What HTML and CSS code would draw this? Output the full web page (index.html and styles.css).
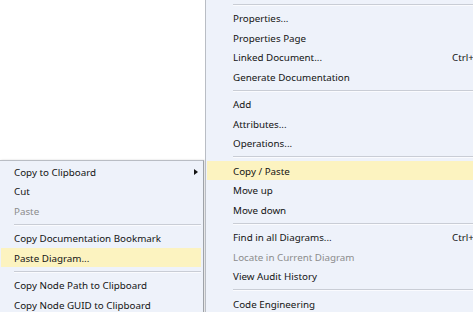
FILE: index.html
```html
<!DOCTYPE html>
<html lang="en">
<head>
  <meta charset="UTF-8" />
  <title>Context Menu</title>
  <link rel="stylesheet" href="styles.css">
</head>
<body>
  <div class="screen">
    <div class="side">
      <div class="submenu">
        <div class="item">Copy to Clipboard <span class="arrow"></span></div>
        <div class="item">Cut</div>
        <div class="item disabled">Paste</div>
        <div class="sep"></div>
        <div class="item">Copy Documentation Bookmark</div>
        <div class="item hot">Paste Diagram...</div>
        <div class="sep"></div>
        <div class="item">Copy Node Path to Clipboard</div>
        <div class="item">Copy Node GUID to Clipboard</div>
      </div>
    </div>

    <div class="menu">
      <div class="sep"></div>
      <div class="item">Properties...</div>
      <div class="item">Properties Page</div>
      <div class="item">Linked Document... <span class="key">Ctrl+</span></div>
      <div class="item">Generate Documentation</div>
      <div class="sep"></div>
      <div class="item">Add</div>
      <div class="item">Attributes...</div>
      <div class="item">Operations...</div>
      <div class="sep"></div>
      <div class="item hot">Copy / Paste</div>
      <div class="item">Move up</div>
      <div class="item">Move down</div>
      <div class="sep"></div>
      <div class="item">Find in all Diagrams... <span class="key">Ctrl+</span></div>
      <div class="item disabled">Locate in Current Diagram</div>
      <div class="item">View Audit History</div>
      <div class="sep"></div>
      <div class="item">Code Engineering</div>
    </div>
  </div>
</body>
</html>
```

FILE: styles.css
```css
body {
  margin: 0;
  padding: 0;
  background-color: #fff;
  font-family: "Noto Sans", "Open Sans", sans-serif;
  font-size: 9.8px;
  color: #141414;
  overflow: hidden;
}

.screen {
  display: flex;
  width: 473px;
  height: 312px;
  overflow: hidden;
  gap: 1px;
}

.side {
  width: 204px;
  padding-top: 159.5px;
}

.submenu {
  background-color: #eef2fa;
  border-top: 1px solid #b9bdc4;
  border-right: 1px solid #9ea2a8;
  padding: 1px 2px 0 1px;
  height: 200px;
  box-shadow: 1px 0 2px rgba(0, 0, 0, 0.15);
}

.submenu .item {
  padding-left: 13px;
}

.submenu .sep {
  margin-left: 13px;
}

.menu {
  flex: 1;
  background-color: #eef2fa;
  border-left: 1px solid #b9bdc4;
  padding-left: 1px;
}

.menu .item {
  padding-left: 26px;
}

.menu .sep {
  margin-left: 26px;
}

.item {
  position: relative;
  height: 19.5px;
  line-height: 21px;
  white-space: nowrap;
  overflow: hidden;
}

.hot {
  background-color: #fcf3c0;
}

.disabled {
  color: #8c8c8c;
}

.sep {
  height: 8px;
  position: relative;
}

.sep::after {
  content: "";
  position: absolute;
  left: 0;
  right: 0;
  top: 3.5px;
  height: 1px;
  background-color: #c9cdd5;
  border-bottom: 1px solid #fafbfe;
}

.key {
  position: absolute;
  left: 245px;
}

.arrow {
  position: absolute;
  right: 3px;
  top: 7px;
  width: 0;
  height: 0;
  border-top: 3px solid transparent;
  border-bottom: 3px solid transparent;
  border-left: 4px solid #141414;
}
```
